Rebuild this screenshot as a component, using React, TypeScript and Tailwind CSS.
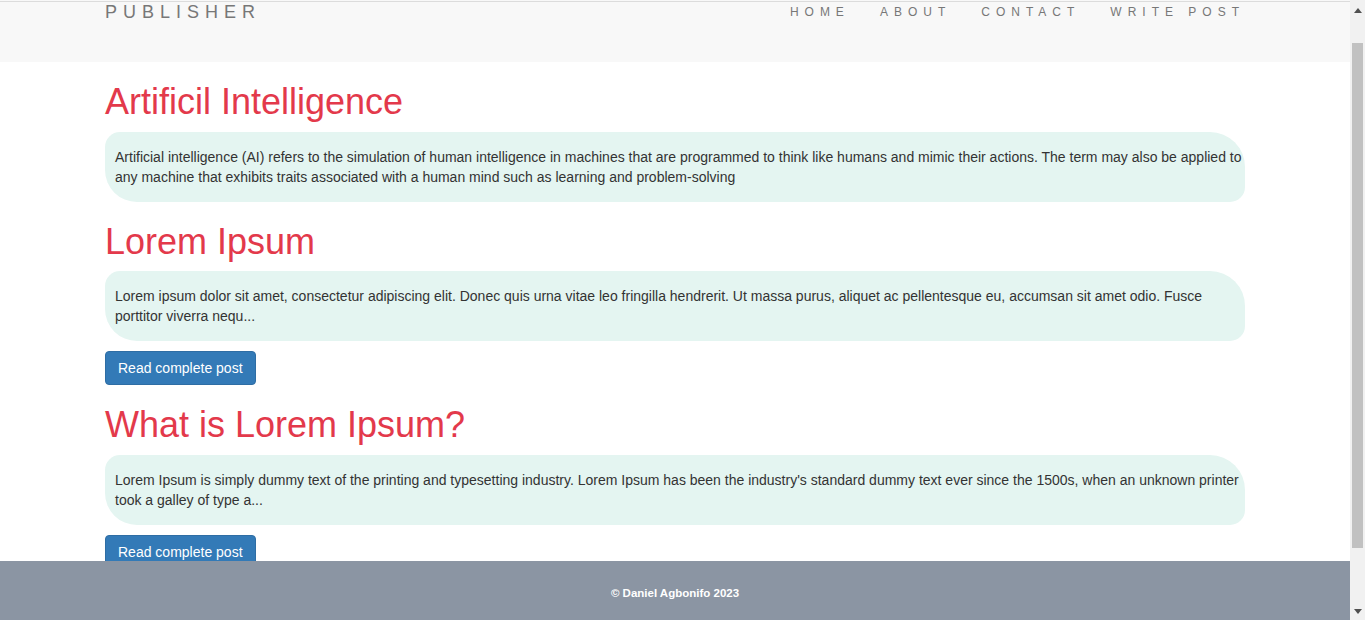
import { useEffect } from "react";

const posts = [
  {
    title: "Artificil Intelligence",
    body: "Artificial intelligence (AI) refers to the simulation of human intelligence in machines that are programmed to think like humans and mimic their actions. The term may also be applied to any machine that exhibits traits associated with a human mind such as learning and problem-solving",
    button: false,
  },
  {
    title: "Lorem Ipsum",
    body: "Lorem ipsum dolor sit amet, consectetur adipiscing elit. Donec quis urna vitae leo fringilla hendrerit. Ut massa purus, aliquet ac pellentesque eu, accumsan sit amet odio. Fusce porttitor viverra nequ...",
    button: true,
  },
  {
    title: "What is Lorem Ipsum?",
    body: "Lorem Ipsum is simply dummy text of the printing and typesetting industry. Lorem Ipsum has been the industry's standard dummy text ever since the 1500s, when an unknown printer took a galley of type a...",
    button: true,
  },
];

function FakeScrollbar() {
  return (
    <div className="fixed top-0 right-0 bottom-0 flex w-[15px] flex-col bg-[#f1f1f1]">
      <div className="flex h-[17px] items-center justify-center pt-[3px]">
        <svg width="8" height="5" viewBox="0 0 8 5">
          <path d="M0 5 L4 0 L8 5 Z" fill="#505050" />
        </svg>
      </div>
      <div className="relative flex-1">
        <div className="absolute top-[26px] right-[2px] left-[2px] h-[505px] bg-[#c1c1c1]" />
      </div>
      <div className="flex h-[17px] items-center justify-center">
        <svg width="8" height="5" viewBox="0 0 8 5">
          <path d="M0 0 L8 0 L4 5 Z" fill="#505050" />
        </svg>
      </div>
    </div>
  );
}

export default function App() {
  useEffect(() => {
    window.scrollTo(0, 32);
    const t = setTimeout(() => window.scrollTo(0, 32), 50);
    return () => clearTimeout(t);
  }, []);

  return (
    <div className="min-h-[720px] bg-white font-['Liberation_Sans',Arial,sans-serif] text-[#333]">
      <div className="mr-[15px]">
        <nav className="h-[94px] bg-[#f8f8f8]">
          <div className="mx-auto flex w-[1140px] items-start justify-between pt-[34px]">
            <div className="text-[18px] leading-[20px] tracking-[6px] text-[#777]">PUBLISHER</div>
            <ul className="flex gap-[30px] text-[12px] leading-[20px] tracking-[6px] text-[#777]">
              <li>HOME</li>
              <li>ABOUT</li>
              <li>CONTACT</li>
              <li>WRITE POST</li>
            </ul>
          </div>
        </nav>

        <main className="mx-auto w-[1140px] pb-[120px]">
          {posts.map((p) => (
            <article key={p.title}>
              <h1 className="mt-[20px] mb-[10px] text-[36px] leading-[39.6px] text-[#e3394b]">{p.title}</h1>
              <p className="rounded-[15px_35px_15px_32px] bg-[#e4f5f1] py-[15px] pr-[2px] pl-[10px] text-[14px] leading-[20px] text-[#333]">
                {p.body}
              </p>
              {p.button && (
                <button className="mt-[10px] rounded-[4px] border border-[#2e6da4] bg-[#337ab7] px-[12px] py-[6px] text-[14px] leading-[20px] text-white">
                  Read complete post
                </button>
              )}
            </article>
          ))}
        </main>
      </div>

      <div className="fixed top-px right-0 left-0 h-px bg-[#dcdcdc]" />

      <footer className="fixed right-[15px] bottom-0 left-0 h-[59px] bg-[#8b95a3] pt-[24px] text-center text-[11.5px] font-bold leading-[16px] text-white">
        © Daniel Agbonifo 2023
      </footer>

      <FakeScrollbar />
    </div>
  );
}
